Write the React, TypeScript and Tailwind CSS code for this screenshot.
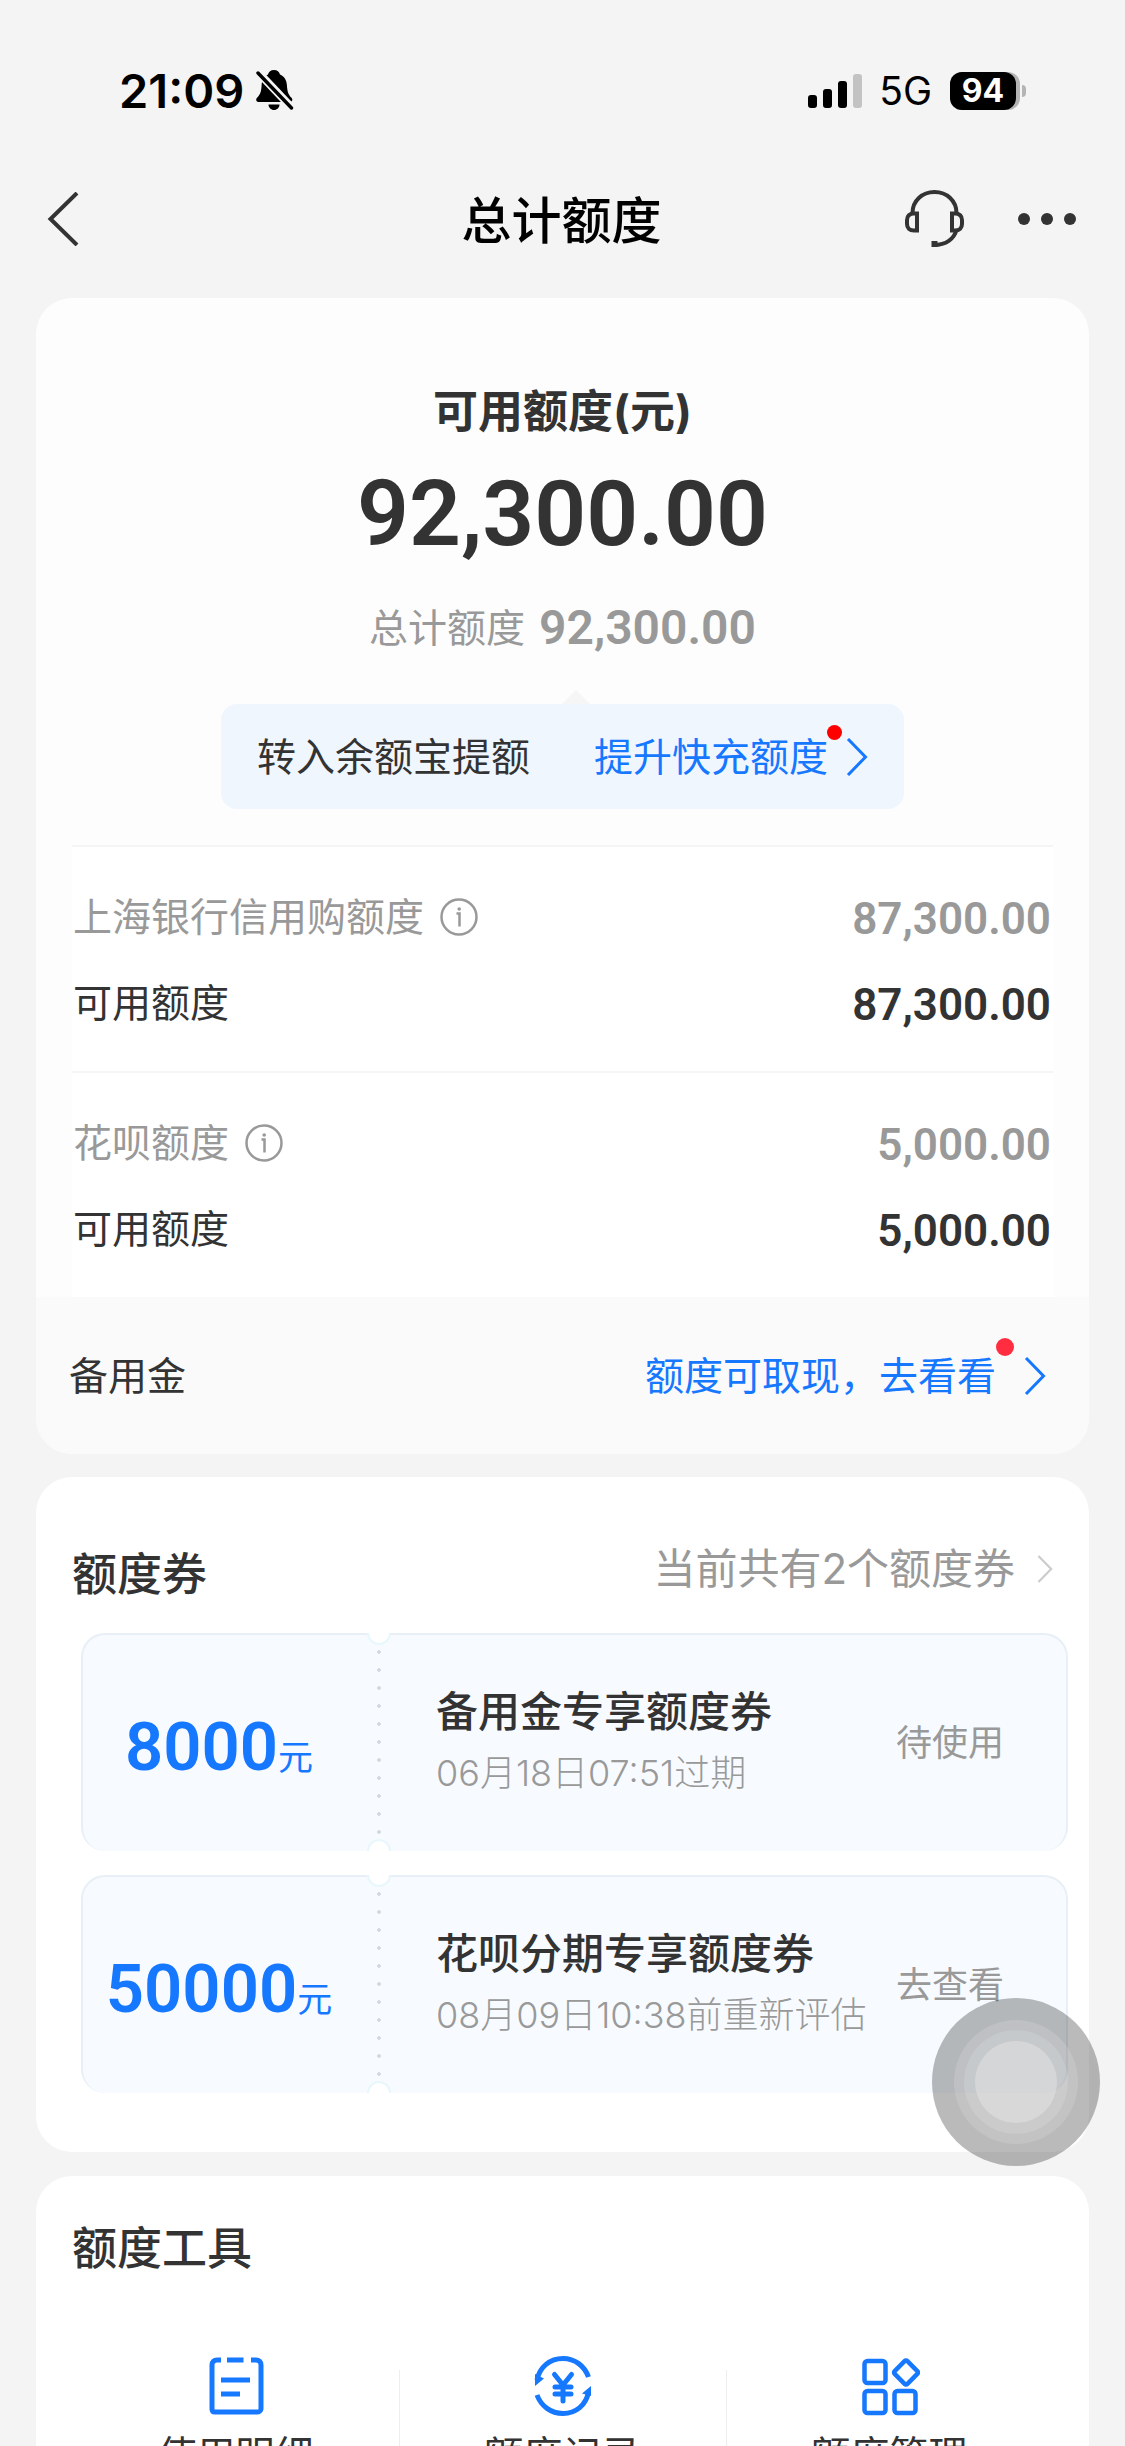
import type { ReactNode } from "react";

const digits = "font-['Roboto','Noto_Sans_CJK_SC',sans-serif] font-semibold";

const quotas = [
  { name: "上海银行信用购额度", total: "87,300.00", available: "87,300.00" },
  { name: "花呗额度", total: "5,000.00", available: "5,000.00" },
];

const coupons = [
  {
    amount: "8000",
    title: "备用金专享额度券",
    note: "06月18日07:51过期",
    action: "待使用",
  },
  {
    amount: "50000",
    title: "花呗分期专享额度券",
    note: "08月09日10:38前重新评估",
    action: "去查看",
  },
];

const tools = [
  { label: "使用明细", icon: <BillIcon /> },
  { label: "额度记录", icon: <RecordIcon /> },
  { label: "额度管理", icon: <ManageIcon /> },
];

function BellOffIcon() {
  return (
    <svg width="38" height="42" viewBox="0 0 38 42" fill="none">
      <path
        d="M18 0c3.200 0 5.400 1.800 6 4.600 4.200 1.800 6.600 5.600 6.900 10.400.4 7 1.600 10 4.600 12.800 1.500 1.400 1 4.200-1.500 4.200H2.500C0 32-.5 29.200 1 27.800c3-2.800 4.300-5.800 4.600-12.800C5.900 10.200 8 6.400 12 4.600 12.600 1.800 14.800 0 18 0Z"
        fill="#000"
      />
      <path d="M12.500 34.500h11c0 3-2.500 5.500-5.500 5.500s-5.500-2.500-5.500-5.500Z" fill="#000" />
      <path d="M0 0l37.500 39.500" stroke="#f4f4f4" strokeWidth="8" />
      <path d="M2 3l33.500 35" stroke="#000" strokeWidth="3.400" strokeLinecap="round" />
    </svg>
  );
}

function SignalIcon() {
  return (
    <svg width="55" height="36" viewBox="0 0 55 36">
      <rect x="0" y="22" width="9" height="13" rx="3" />
      <rect x="15" y="16" width="9" height="19" rx="3" />
      <rect x="30" y="8" width="9" height="27" rx="3" />
      <rect x="45" y="1" width="9" height="34" rx="3" fill="#c3c3c3" />
    </svg>
  );
}

function HeadsetIcon() {
  return (
    <svg width="59" height="58" viewBox="0 0 59 58" fill="none" stroke="#333" strokeWidth="4">
      <path d="M7.500 23C7.500 11 17 2 29.500 2S51.500 11 51.500 23" />
      <path d="M12 23.500v17H9c-4.500 0-7-2.500-7-6.500v-4c0-4 2.500-6.500 7-6.500h3Z" />
      <path d="M47 23.500v17h3c4.500 0 7-2.500 7-6.500v-4c0-4-2.500-6.500-7-6.500h-3Z" />
      <path d="M51.500 40C49 49 41 55 29 55" />
      <path d="M26.500 54h6" strokeWidth="6" />
    </svg>
  );
}

function Chevron({ className }: { className?: string }) {
  return (
    <svg className={className} viewBox="0 0 22 38" fill="none" stroke="currentColor" strokeWidth="3">
      <path d="M2 1l17.500 18L2 37" />
    </svg>
  );
}

function InfoIcon() {
  return (
    <svg width="38" height="38" viewBox="0 0 38 38" fill="none" stroke="#999" strokeWidth="2.500">
      <circle cx="19" cy="19" r="17.500" />
      <path d="M16.500 15.500h3v13" />
      <circle cx="19.200" cy="11" r="1.800" fill="#999" stroke="none" />
    </svg>
  );
}

function BillIcon() {
  return (
    <svg width="60" height="60" viewBox="0 0 60 60" fill="none" stroke="#1677ff" strokeWidth="5">
      <path d="M15 4h-4c-3 0-5 2-5 5v44c0 2 1 3 3 3h42c2 0 4-1 4-3V9c0-3-2-5-5-5h-5" />
      <path d="M21 4h16.500M15 24h29M15 38h19" />
    </svg>
  );
}

function RecordIcon() {
  return (
    <svg width="60" height="60" viewBox="0 0 60 60" fill="none" stroke="#1677ff" strokeWidth="5">
      <path d="M4 24C6.500 11 17 2.500 30 2.500c12 0 21.500 7.500 25.500 18.500" />
      <path d="M4 39c4 11 14 18.500 26 18.500 13 0 23-8.500 25.500-21.500" />
      <path d="M2 30V18l9 4.500ZM58 30v10l-9-2.500Z" fill="#1677ff" stroke="none" />
      <path d="M21.500 18.500L30 29l8.500-10.500M30 29v16M22 31h16M22 38h16" strokeLinecap="round" />
    </svg>
  );
}

function ManageIcon() {
  return (
    <svg width="60" height="60" viewBox="0 0 60 60" fill="none" stroke="#1677ff" strokeWidth="4.500">
      <rect x="4.500" y="5" width="21" height="22" rx="3" />
      <rect x="4.500" y="35" width="21" height="22" rx="3" />
      <rect x="34.500" y="35" width="21" height="22" rx="3" />
      <rect x="37" y="7.500" width="18" height="18" rx="2" transform="rotate(45 46 16.500)" />
    </svg>
  );
}

function StatusBar() {
  return (
    <div className="flex h-[182px] items-center justify-between pr-[99px] pl-[119px] text-black">
      <div className="flex items-center gap-3">
        <span className="text-[47px] leading-[60px] font-semibold">21:09</span>
        <BellOffIcon />
      </div>
      <div className="flex items-center">
        <SignalIcon />
        <span className="ml-4 text-[39px] leading-[60px]">5G</span>
        <div className="ml-[18px] flex items-center gap-[2px]">
          <div className="rounded-[12px] bg-[#b4b4b4] pr-1">
            <div className="flex h-[38px] w-[66px] items-center justify-center rounded-[12px] bg-black text-[32px] leading-[38px] font-bold text-white">
              94
            </div>
          </div>
          <div className="h-3 w-1 rounded-r-full bg-[#b4b4b4]" />
        </div>
      </div>
    </div>
  );
}

function Header() {
  return (
    <header className="mb-[42px] grid h-[74px] grid-cols-3 items-center pr-[49px] pl-[47px]">
      <button aria-label="返回" className="w-fit">
        <svg width="32" height="54" viewBox="0 0 32 54" fill="none" stroke="#333" strokeWidth="4">
          <path d="M30 1L3.500 27 30 53" />
        </svg>
      </button>
      <h1 className="pt-1 text-center text-[50px] leading-[70px] font-medium text-black">总计额度</h1>
      <div className="flex items-center justify-end gap-[54px]">
        <button aria-label="客服">
          <HeadsetIcon />
        </button>
        <button aria-label="更多" className="flex gap-[11px]">
          <span className="h-3 w-3 rounded-full bg-[#333]" />
          <span className="h-3 w-3 rounded-full bg-[#333]" />
          <span className="h-3 w-3 rounded-full bg-[#333]" />
        </button>
      </div>
    </header>
  );
}

function Row({ label, value, className }: { label: ReactNode; value: string; className: string }) {
  return (
    <div className={`flex h-[60px] items-center justify-between leading-[60px] ${className}`}>
      <span className="flex items-center gap-4 text-[39px]">{label}</span>
      <span className={`pt-1 text-[44px] ${digits}`}>{value}</span>
    </div>
  );
}

function TotalCard() {
  return (
    <section className="overflow-hidden rounded-[36px] bg-[#fdfdfd]">
      <div className="flex flex-col items-center pt-[84px] pb-9">
        <h2 className="text-[45px] leading-[60px] font-bold">可用额度(元)</h2>
        <p className={`mt-[26px] text-[91px] leading-[92px] ${digits}`}>92,300.00</p>
        <p className="mt-[38px] flex items-center gap-[14px] text-[39px] leading-[60px] text-[#999]">
          总计额度 <span className={`text-[48px] ${digits}`}>92,300.00</span>
        </p>
        <div className="relative mt-[46px] flex h-[105px] items-center rounded-[16px] bg-[#f0f6fe] px-9 text-[39px] leading-[60px]">
          <span className="absolute bottom-full left-[52%] -translate-x-1/2 border-x-[14px] border-b-[14px] border-x-transparent border-b-[#f6f6f6]" />
          <span>转入余额宝提额</span>
          <a href="#raise" className="relative ml-[64px] flex items-center gap-[18px] text-[#1677ff]">
            提升快充额度
            <Chevron className="h-[38px] w-[22px]" />
            <span className="absolute -top-[2px] right-[26px] h-[15px] w-[15px] rounded-full bg-[#ff0000]" />
          </a>
        </div>
      </div>
      <div className="mx-9 bg-white">
        {quotas.map((quota) => (
          <div
            key={quota.name}
            className="flex flex-col gap-[26px] border-t-2 border-[#f5f5f5] pt-10 pr-[2px] pb-[38px] pl-px"
          >
            <Row
              label={
                <>
                  {quota.name}
                  <InfoIcon />
                </>
              }
              value={quota.total}
              className="text-[#999]"
            />
            <Row label="可用额度" value={quota.available} className="" />
          </div>
        ))}
      </div>
      <div className="flex h-[157px] items-center justify-between bg-[#fafafa] pr-[43px] pl-[33px] text-[39px] leading-[60px]">
        <span>备用金</span>
        <a href="#cash" className="relative flex items-center gap-7 text-[#1677ff]">
          额度可取现，去看看
          <Chevron className="h-[38px] w-[22px]" />
          <span className="absolute -top-2 right-8 h-[18px] w-[18px] rounded-full bg-[#ff2d3f]" />
        </a>
      </div>
    </section>
  );
}

function Coupon({ amount, title, note, action }: (typeof coupons)[number]) {
  return (
    <li className="relative flex h-[218px] items-center rounded-[24px] border-2 border-b-0 border-[#e8eff6] bg-[#f7fbff]">
      <div className="flex w-[296px] items-baseline justify-center pt-2 pr-6 text-[#1677ff]">
        <span className={`text-[67px] leading-[80px] ${digits}`}>{amount}</span>
        <span className="text-[35px]">元</span>
      </div>
      <div className="absolute inset-y-[8px] left-[293px] w-[6px] bg-[radial-gradient(circle,#d3dae3_2px,transparent_2px)] bg-[length:6px_18px]" />
      <div className="absolute -top-[2px] left-[284px] h-3 w-6 rounded-b-full border-2 border-t-0 border-[#e8f7fc] bg-white" />
      <div className="absolute bottom-0 left-[284px] h-3 w-6 rounded-t-full border-2 border-b-0 border-[#e8f7fc] bg-white" />
      <div className="flex-1 pb-1 pl-[57px]">
        <h3 className="text-[42px] leading-[60px] font-medium">{title}</h3>
        <p className="mt-1 text-[36px] leading-[54px] font-light text-[#999]">{note}</p>
      </div>
      <button className="absolute right-[62px] text-[36px] leading-[50px] text-[#999]">{action}</button>
    </li>
  );
}

function CouponCard() {
  return (
    <section className="mt-[23px] rounded-[36px] bg-white pt-16 pb-[59px]">
      <div className="mb-[26px] flex items-start justify-between px-9">
        <h2 className="pt-[2px] text-[45px] leading-[64px] font-medium">额度券</h2>
        <a href="#coupons" className="flex items-center gap-[22px] text-[42px] leading-[56px] text-[#999]">
          当前共有2个额度券
          <Chevron className="h-8 w-4 text-[#ccc]" />
        </a>
      </div>
      <ul className="flex flex-col gap-6 pr-[21px] pl-[45px]">
        {coupons.map((coupon) => (
          <Coupon key={coupon.title} {...coupon} />
        ))}
      </ul>
    </section>
  );
}

function ToolCard() {
  return (
    <section className="mt-6 rounded-[36px] bg-white px-9 pt-10 pb-16">
      <h2 className="text-[45px] leading-[66px] font-medium">额度工具</h2>
      <div className="mt-[74px] grid grid-cols-3">
        {tools.map((tool, i) => (
          <button key={tool.label} className="relative flex flex-col items-center text-[39px] leading-[54px]">
            {tool.icon}
            <span className="mt-3">{tool.label}</span>
            {i > 0 && <span className="absolute top-[14px] bottom-0 left-0 w-px bg-[#eee]" />}
          </button>
        ))}
      </div>
    </section>
  );
}

// Floating assistive button that stays over the page
function AssistiveTouch() {
  return (
    <button
      aria-label="辅助触控"
      className="fixed right-[25px] bottom-[280px] flex h-[168px] w-[168px] items-center justify-center rounded-full bg-black/27"
    >
      <span className="flex h-[124px] w-[124px] items-center justify-center rounded-full bg-white/12">
        <span className="flex h-[104px] w-[104px] items-center justify-center rounded-full bg-white/12">
          <span className="h-[82px] w-[82px] rounded-full bg-white/25" />
        </span>
      </span>
    </button>
  );
}

export default function App() {
  return (
    <div className="h-screen overflow-y-auto bg-[#f4f4f4] font-['Inter','Noto_Sans_CJK_SC',sans-serif] text-[#333] [scrollbar-width:none]">
      <StatusBar />
      <Header />
      <main className="px-9 pb-9">
        <TotalCard />
        <CouponCard />
        <ToolCard />
      </main>
      <AssistiveTouch />
    </div>
  );
}
